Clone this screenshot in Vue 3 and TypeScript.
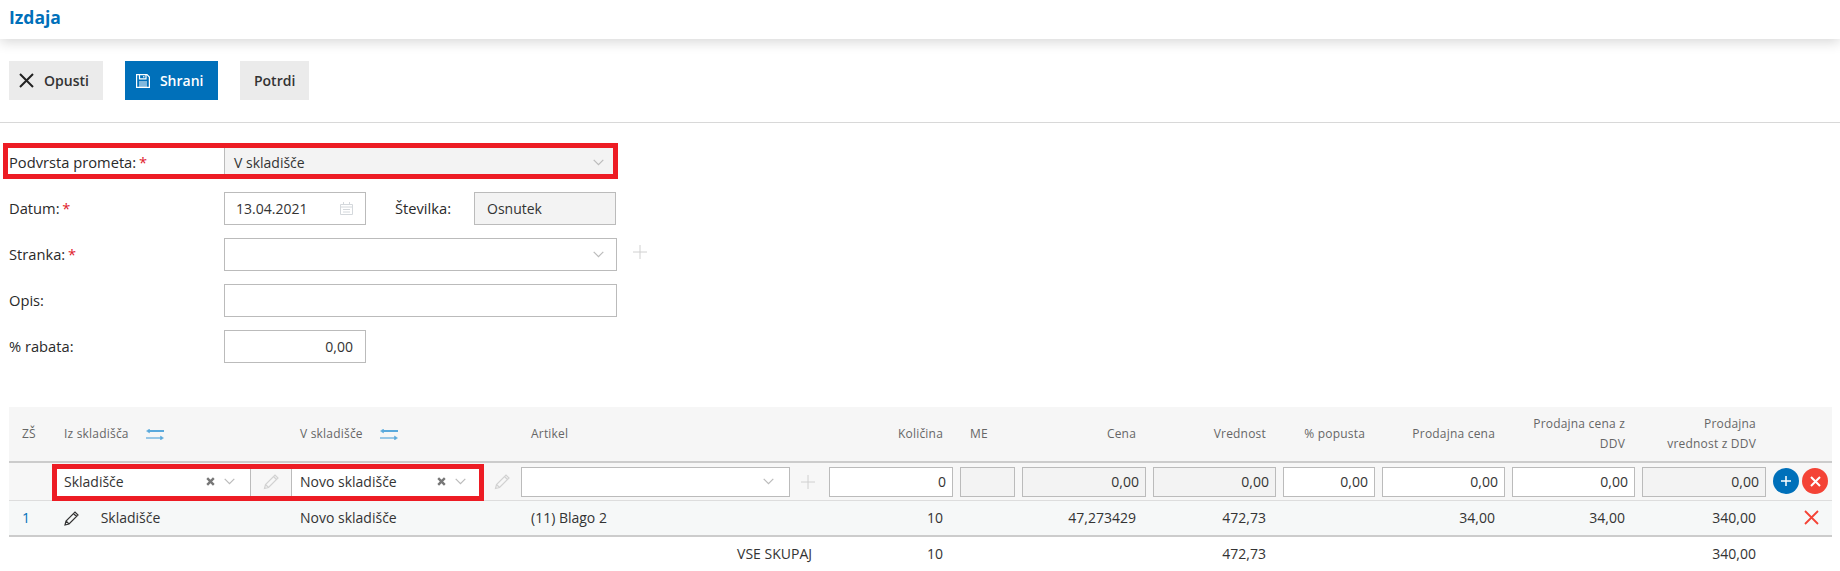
<script setup lang="ts">
interface Col {
  label: string
  right?: boolean
}

const columns: Col[] = [
  { label: 'Količina', right: true },
  { label: 'ME' },
  { label: 'Cena', right: true },
  { label: 'Vrednost', right: true },
  { label: '% popusta', right: true },
  { label: 'Prodajna cena', right: true },
  { label: 'Prodajna cena z DDV', right: true },
  { label: 'Prodajna vrednost z DDV', right: true },
]

const entryFields = [
  { value: '0', disabled: false },
  { value: '', disabled: true },
  { value: '0,00', disabled: true },
  { value: '0,00', disabled: true },
  { value: '0,00', disabled: false },
  { value: '0,00', disabled: false },
  { value: '0,00', disabled: false },
  { value: '0,00', disabled: true },
]

const rowValues = ['10', '', '47,273429', '472,73', '', '34,00', '34,00', '340,00']
const totalValues = ['10', '', '', '472,73', '', '', '', '340,00']
</script>

<template>
  <div class="page">
    <header class="top-bar">
      <h1>Izdaja</h1>
    </header>

    <div class="toolbar">
      <button class="btn">
        <svg width="15" height="15" viewBox="0 0 15 15"><path d="M1 1l13 13M14 1L1 14" stroke="#222" stroke-width="2" fill="none" /></svg>
        Opusti
      </button>
      <button class="btn btn-primary">
        <svg width="14" height="14" viewBox="0 0 14 14" fill="none" stroke="#fff" stroke-width="1.200">
          <path d="M.6.6h10.400l2.400 2.400v10.400H.6z" />
          <path d="M3.500.8v4h6.500V.8M7.800 2v1.600M3 8h8M3 10h8M3 12h8" />
        </svg>
        Shrani
      </button>
      <button class="btn">Potrdi</button>
    </div>

    <form class="form" @submit.prevent>
      <div class="highlight form-highlight"></div>

      <label>Podvrsta prometa: <em>*</em></label>
      <div class="select wide readonly">
        <span>V skladišče</span>
        <svg class="chevron" width="11" height="7" viewBox="0 0 11 7"><path d="M.7.8l4.800 4.800L10.300.8" /></svg>
      </div>

      <label>Datum: <em>*</em></label>
      <div class="inline-fields">
        <div class="field narrow date">
          <span>13.04.2021</span>
          <svg width="13" height="13" viewBox="0 0 13 13" fill="none" stroke="#d4d8dc" stroke-width="1">
            <path d="M.5 2.500h12v10h-12zM3.500 0v2.500M9.500 0v2.500M.5 5h12M3 7.500h7M3 10h7" />
          </svg>
        </div>
        <span class="number-label">Številka:</span>
        <div class="field narrow readonly osnutek"><span>Osnutek</span></div>
      </div>

      <label>Stranka: <em>*</em></label>
      <div class="with-add">
        <div class="select wide">
          <span></span>
          <svg class="chevron" width="11" height="7" viewBox="0 0 11 7"><path d="M.7.8l4.800 4.800L10.300.8" /></svg>
        </div>
        <svg class="plus" width="14" height="14" viewBox="0 0 14 14"><path d="M7 0v14M0 7h14" /></svg>
      </div>

      <label>Opis:</label>
      <div class="field wide"></div>

      <label>% rabata:</label>
      <div class="field narrow number"><span>0,00</span></div>
    </form>

    <section class="table">
      <div class="tr thead">
        <div class="td zs">ZŠ</div>
        <div class="td">
          Iz skladišča
          <svg class="swap" width="18" height="11" viewBox="0 0 18 11" fill="none" stroke="#5aa9dc">
            <path d="M2 2h16" stroke-width="2" />
            <path d="M3.500 0L.5 2l3 2z" fill="#5aa9dc" stroke-width=".5" />
            <path d="M0 9h16" stroke-width="1.200" />
            <path d="M14.500 7l3 2-3 2z" fill="#5aa9dc" stroke-width=".5" />
          </svg>
        </div>
        <div class="td">
          V skladišče
          <svg class="swap" width="18" height="11" viewBox="0 0 18 11" fill="none" stroke="#5aa9dc">
            <path d="M2 2h16" stroke-width="2" />
            <path d="M3.500 0L.5 2l3 2z" fill="#5aa9dc" stroke-width=".5" />
            <path d="M0 9h16" stroke-width="1.200" />
            <path d="M14.500 7l3 2-3 2z" fill="#5aa9dc" stroke-width=".5" />
          </svg>
        </div>
        <div class="td article">Artikel</div>
        <div v-for="col in columns" :key="col.label" class="td" :class="{ right: col.right, unit: !col.right }">
          {{ col.label }}
        </div>
        <div class="td"></div>
      </div>

      <div class="tr entry">
        <div class="highlight entry-highlight"></div>
        <div class="td"></div>
        <div class="td picker">
          <div class="select from">
            <span>Skladišče</span>
            <svg class="clear" width="9" height="9" viewBox="0 0 9 9"><path d="M1.200 1.200l6.600 6.600M7.800 1.200L1.200 7.800" /></svg>
            <svg class="chevron" width="11" height="7" viewBox="0 0 11 7"><path d="M.7.8l4.800 4.800L10.300.8" /></svg>
          </div>
          <svg class="pencil" width="16" height="16" viewBox="0 0 16 16" fill="none" stroke="#d2d2d2" stroke-width="1.200">
            <path d="M1.500 14.500l1-4L12 1l3 3-9.500 9.500zM2.500 10.500l3 3M10.500 2.500l3 3" />
          </svg>
        </div>
        <div class="td picker">
          <div class="select to">
            <span>Novo skladišče</span>
            <svg class="clear" width="9" height="9" viewBox="0 0 9 9"><path d="M1.200 1.200l6.600 6.600M7.800 1.200L1.200 7.800" /></svg>
            <svg class="chevron" width="11" height="7" viewBox="0 0 11 7"><path d="M.7.8l4.800 4.800L10.300.8" /></svg>
          </div>
          <svg class="pencil" width="16" height="16" viewBox="0 0 16 16" fill="none" stroke="#d2d2d2" stroke-width="1.200">
            <path d="M1.500 14.500l1-4L12 1l3 3-9.500 9.500zM2.500 10.500l3 3M10.500 2.500l3 3" />
          </svg>
        </div>
        <div class="td picker">
          <div class="select article-select">
            <span></span>
            <svg class="chevron" width="11" height="7" viewBox="0 0 11 7"><path d="M.7.8l4.800 4.800L10.300.8" /></svg>
          </div>
          <svg class="plus row-plus" width="14" height="14" viewBox="0 0 14 14"><path d="M7 0v14M0 7h14" /></svg>
        </div>
        <div v-for="(field, i) in entryFields" :key="i" class="td bare">
          <div class="cell-input" :class="{ readonly: field.disabled }">{{ field.value }}</div>
        </div>
        <div class="td actions">
          <button class="round add" aria-label="Dodaj">
            <svg width="12" height="12" viewBox="0 0 12 12"><path d="M6 1v10M1 6h10" stroke="#fff" stroke-width="1.500" /></svg>
          </button>
          <button class="round remove" aria-label="Odstrani">
            <svg width="11" height="11" viewBox="0 0 11 11"><path d="M1 1l9 9M10 1l-9 9" stroke="#fff" stroke-width="2" /></svg>
          </button>
        </div>
      </div>

      <div class="tr data">
        <div class="td zs link">1</div>
        <div class="td">
          <svg class="edit" width="15" height="15" viewBox="0 0 15 15" fill="none" stroke="#333" stroke-width="1.200">
            <path d="M1 14l1-4L11 1l3 3-9 9zM2 10l3 3M9.500 2.500l3 3" />
          </svg>
          Skladišče
        </div>
        <div class="td">Novo skladišče</div>
        <div class="td article">(11) Blago 2</div>
        <div v-for="(val, i) in rowValues" :key="i" class="td right">{{ val }}</div>
        <div class="td delete">
          <svg width="15" height="15" viewBox="0 0 15 15"><path d="M1 1l13 13M14 1L1 14" stroke="#f44336" stroke-width="1.800" /></svg>
        </div>
      </div>

      <div class="tr total">
        <div class="td"></div>
        <div class="td"></div>
        <div class="td"></div>
        <div class="td right">VSE SKUPAJ</div>
        <div v-for="(val, i) in totalValues" :key="i" class="td right">{{ val }}</div>
        <div class="td"></div>
      </div>
    </section>
  </div>
</template>

<style>
html,
body {
  margin: 0;
  background: #fff;
}
</style>

<style scoped>
.page {
  height: 571px;
  overflow: hidden;
  font-family: "Open Sans", "Liberation Sans", sans-serif;
  font-size: 14px;
  color: #333;
  background: #fff;
}

.top-bar {
  height: 39px;
  box-shadow: 0 3px 12px rgba(0, 0, 0, 0.16);
  position: relative;
}

.top-bar h1 {
  margin: 0;
  padding: 6px 0 0 9px;
  font-size: 17.5px;
  line-height: 22px;
  font-weight: 700;
  color: #0070ba;
}

.toolbar {
  display: flex;
  gap: 22px;
  padding: 22px 9px 22px;
  border-bottom: 1px solid #d8d8d8;
}

.btn {
  display: flex;
  align-items: center;
  gap: 10px;
  height: 39px;
  padding: 0 14px 0 10px;
  border: none;
  background: #ebebeb;
  font-family: inherit;
  font-size: 14px;
  font-weight: 600;
  color: #333;
}

.btn:last-child {
  padding: 0 13.5px;
}

.btn-primary {
  background: #0070ba;
  color: #fff;
  padding: 0 15px 0 11px;
}

.form {
  position: relative;
  display: grid;
  grid-template-columns: 215px auto;
  grid-auto-rows: 33px;
  row-gap: 13px;
  align-items: center;
  justify-content: start;
  padding: 23px 0 0 9px;
}

.form label {
  padding-bottom: 2px;
  font-size: 14.7px;
  font-weight: 500;
  color: #2a2a2a;
}

.form em {
  margin-left: -1px;
  color: #e0202a;
  font-style: normal;
}

.highlight {
  position: absolute;
  box-sizing: border-box;
  border: 5px solid #ed1c24;
  z-index: 2;
  pointer-events: none;
}

.form-highlight {
  left: 3px;
  top: 20px;
  width: 615px;
  height: 36px;
}

.entry-highlight {
  left: 43px;
  top: 1px;
  width: 432px;
  height: 37px;
}

.select,
.field {
  box-sizing: border-box;
  display: flex;
  align-items: center;
  height: 33px;
  padding: 0 10px 0 9px;
  border: 1px solid #bbb;
  background: #fff;
}

.select span,
.field span {
  flex: 1;
}

.wide {
  width: 393px;
}

.narrow {
  width: 142px;
}

.date,
.number {
  padding: 0 12px 0 11px;
}

.osnutek {
  padding: 0 12px;
}

.readonly {
  background: #f3f3f3;
}

.number {
  text-align: right;
}

.chevron {
  fill: none;
  stroke: #bbb;
  stroke-width: 1.200;
  flex: none;
  margin-right: 2px;
}

.clear {
  fill: none;
  stroke: #777;
  stroke-width: 2.400;
  flex: none;
  margin-right: 9px;
}

.plus {
  stroke: #d0d0d0;
  stroke-width: 1;
  fill: none;
}

.inline-fields,
.with-add {
  display: flex;
  align-items: center;
}

.with-add .plus {
  margin: -6px 0 0 16px;
}

.number-label {
  width: 108px;
  padding: 0 0 2px 29px;
  box-sizing: border-box;
  font-size: 14.7px;
  font-weight: 500;
  color: #2a2a2a;
}

.table {
  margin: 44px 8px 0 9px;
}

.tr {
  position: relative;
  display: grid;
  grid-template-columns: 46px 236px 230px 308px 131px 62px 131px 130px 99px 130px 130px 131px 58px;
  align-items: center;
}

.td {
  box-sizing: border-box;
  padding-left: 9px;
  min-width: 0;
}

.bare {
  padding-left: 0;
}

.right {
  text-align: right;
  padding: 0 17px 0 0;
}

.article {
  padding-left: 10px;
}

.unit {
  padding-left: 10px;
}

.thead {
  height: 54px;
  background: #f6f6f6;
  border-bottom: 2px solid #ccc;
  font-size: 12px;
  line-height: 20px;
  letter-spacing: 0.2px;
  color: #666;
}

.thead .td:nth-child(12) {
  padding-left: 25px;
}

.zs {
  padding-left: 13px;
}

.swap {
  vertical-align: middle;
  margin-left: 14px;
}

.entry {
  height: 38px;
  box-sizing: border-box;
  background: #f7f7f7;
  border-bottom: 1px solid #ddd;
}

.picker {
  display: flex;
  align-items: center;
  padding-left: 0;
}

.entry .select {
  height: 30px;
  padding-left: 8px;
  padding-bottom: 1px;
}

.entry .select .chevron {
  margin-right: 5px;
}

.from {
  width: 196px;
}

.to {
  width: 191px;
}

.article-select {
  width: 269px;
}

.pencil {
  margin-left: 12px;
}

.row-plus {
  margin-left: 11px;
}

.cell-input {
  box-sizing: border-box;
  height: 30px;
  margin-right: 7px;
  padding: 0 6px 0 0;
  border: 1px solid #bbb;
  background: #fff;
  line-height: 28px;
  text-align: right;
}

.cell-input.readonly {
  background: #f3f3f3;
}

.actions {
  display: flex;
  gap: 3px;
  padding-left: 0;
  margin-top: -1px;
}

.round {
  display: flex;
  align-items: center;
  justify-content: center;
  width: 26px;
  height: 26px;
  padding: 0;
  border: none;
  border-radius: 50%;
}

.add {
  background: #0070ba;
}

.remove {
  background: #f44336;
}

.data {
  height: 36px;
  box-sizing: border-box;
  padding-bottom: 2px;
  background: #f6f8f8;
  border-bottom: 2px solid #ccc;
}

.link {
  color: #0070ba;
}

.edit {
  vertical-align: middle;
  margin-right: 18px;
}

.delete {
  display: flex;
  justify-content: flex-end;
  padding-right: 12px;
}

.total {
  height: 34px;
  padding-bottom: 2px;
  box-sizing: border-box;
}
</style>
